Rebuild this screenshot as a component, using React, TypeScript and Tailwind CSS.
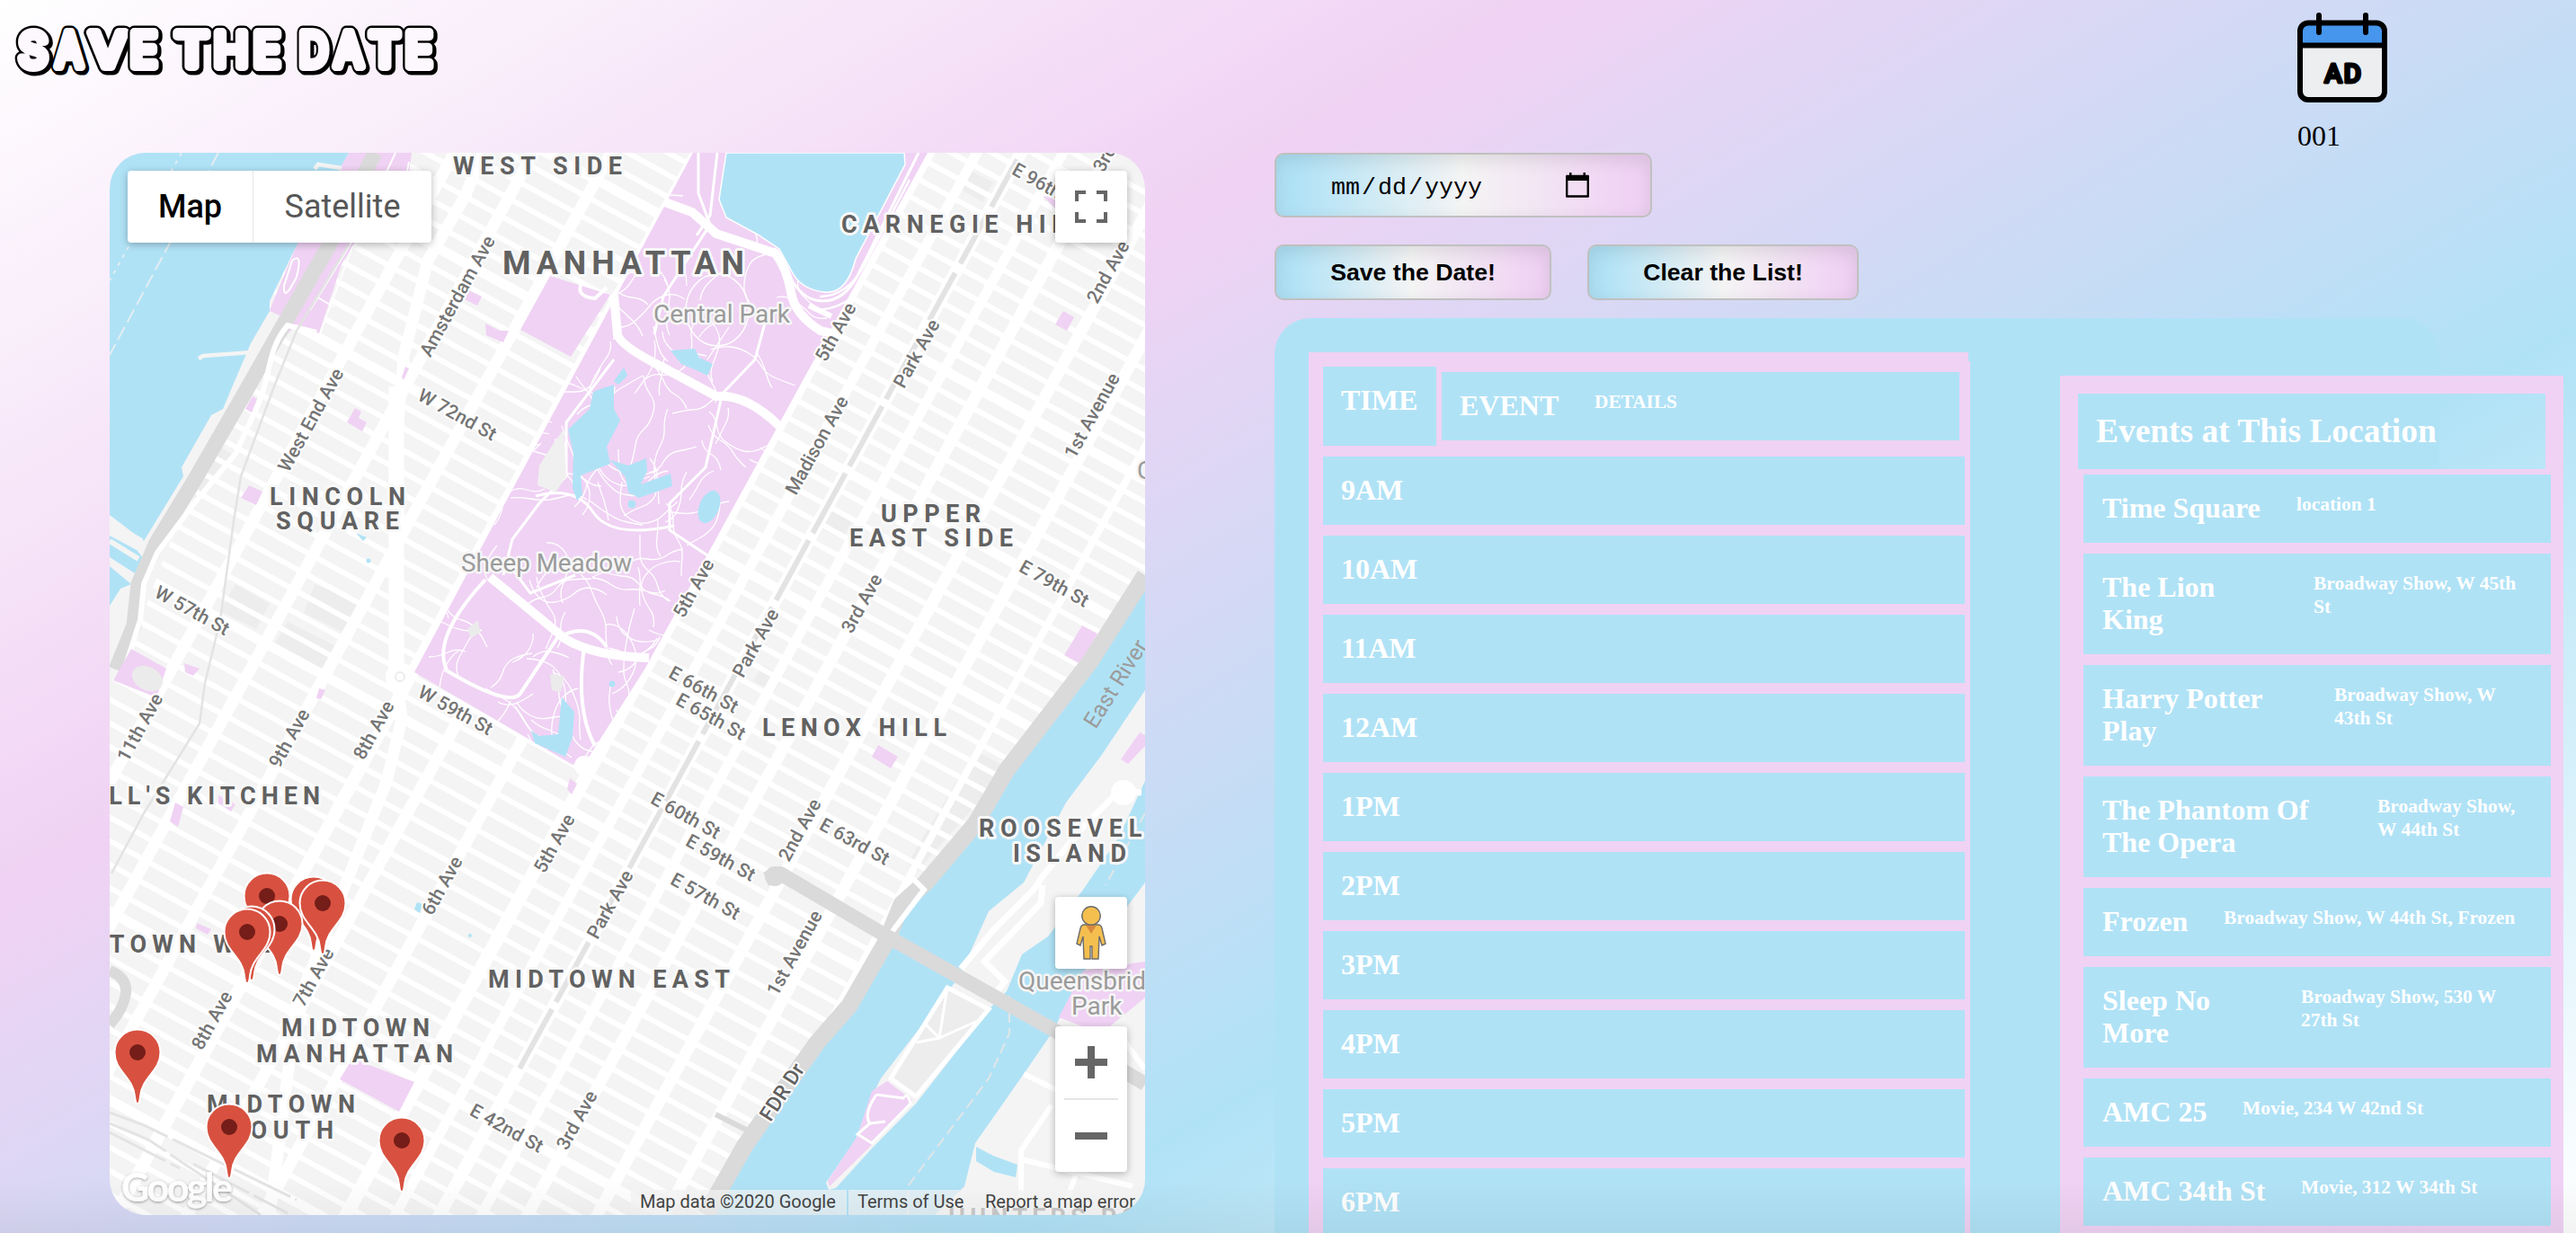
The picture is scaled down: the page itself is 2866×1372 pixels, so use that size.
import React from "react";

const SERIF = "font-['Liberation_Serif',serif]";

/* ---------- Map geometry ---------- */

const range = (a: number, b: number, s: number) => {
  const out: number[] = [];
  for (let v = a; v <= b; v += s) out.push(v);
  return out;
};

const NORTH_STREETS = range(0, 40, 1).map((n) => -n * 21.6);
const SOUTH_STREETS = range(1, 40, 1).map((n) => n * 23);

const AVENUES: [number, number][] = [
  [-392, 9], [-312, 10], [-237, 13], [-160, 13], [-84, 13], [0, 14], [225, 15],
  [273, 11], [316, 14], [357, 11], [402, 13], [470, 13], [536, 13], [594, 8],
];

function rng(seed: number) {
  let s = seed;
  return () => {
    s = (s * 16807) % 2147483647;
    return s / 2147483647;
  };
}

function parkPaths() {
  const r = rng(77);
  const out: string[] = [];
  for (let i = 0; i < 120; i++) {
    const u = r() * 225;
    const v = -r() * 660;
    let x = 457 + u * 0.877 - v * 0.48;
    let y = 752 + u * 0.48 + v * 0.877;
    let a = r() * Math.PI * 2;
    let d = `M${x.toFixed(0)} ${y.toFixed(0)}`;
    const n = 2 + Math.floor(r() * 4);
    for (let k = 0; k < n; k++) {
      const mx = x + Math.cos(a) * 10;
      const my = y + Math.sin(a) * 10;
      a += (r() - 0.5) * 1.9;
      x = mx + Math.cos(a) * 12;
      y = my + Math.sin(a) * 12;
      d += `Q${mx.toFixed(0)} ${my.toFixed(0)} ${x.toFixed(0)} ${y.toFixed(0)}`;
    }
    out.push(d);
  }
  return out.join("");
}
const PARK_PATHS = parkPaths();

const PARK = "771,170 1032,170 717,745 656,841 637,851 461,748";
const PINK = "#f0d2f4";
const BLUE = "#b0e2f6";
const HWY = "#dadada";

type Area = [string, number, number, number, number?];
const AREAS: Area[] = [
  ["WEST SIDE", 504, 194, 188],
  ["MANHATTAN", 559, 305, 269, 36],
  ["CARNEGIE HILL", 936, 259, 270],
  ["LINCOLN", 300, 562, 151],
  ["SQUARE", 307, 589, 137],
  ["UPPER", 980, 581, 111],
  ["EAST SIDE", 945, 608, 182],
  ["LENOX HILL", 848, 819, 205],
  ["HELL'S KITCHEN", 75, 895, 281],
  ["MIDTOWN WEST", 55, 1060, 273],
  ["MIDTOWN", 313, 1153, 165],
  ["MANHATTAN", 285, 1182, 219],
  ["MIDTOWN", 230, 1238, 165],
  ["SOUTH", 255, 1267, 116],
  ["MIDTOWN EAST", 543, 1099, 269],
  ["ROOSEVELT", 1089, 931, 202],
  ["ISLAND", 1127, 959, 126],
  ["HUNTERS POINT", 1055, 1364, 270],
];

const AVE_LABELS: [string, number, number][] = [
  ["Amsterdam Ave", 508, 329], ["West End Ave", 345, 467], ["11th Ave", 155, 809],
  ["9th Ave", 321, 821], ["8th Ave", 415, 812], ["5th Ave", 616, 938], ["6th Ave", 491, 985],
  ["Park Ave", 678, 1006], ["7th Ave", 348, 1087], ["8th Ave", 235, 1135], ["3rd Ave", 641, 1246],
  ["5th Ave", 929, 369], ["Park Ave", 1019, 393], ["Madison Ave", 908, 495],
  ["1st Avenue", 1214, 462], ["2nd Ave", 1232, 302], ["5th Ave", 771, 654], ["3rd Ave", 958, 671],
  ["Park Ave", 840, 715], ["3rd Ave", 1238, 158], ["2nd Ave", 889, 923], ["1st Avenue", 883, 1060],
];
const ST_LABELS: [string, number, number][] = [
  ["W 72nd St", 509, 461], ["W 57th St", 214, 679], ["W 59th St", 507, 790], ["E 42nd St", 564, 1255],
  ["E 79th St", 1173, 649], ["E 96th St", 1165, 207], ["E 66th St", 783, 767], ["E 65th St", 791, 797],
  ["E 60th St", 763, 907], ["E 59th St", 802, 954], ["E 57th St", 785, 997], ["E 63rd St", 951, 936],
];

const PINS: [number, number][] = [
  [297, 1054], [349, 1058], [359, 1062], [311, 1085], [280, 1091], [275, 1094],
  [153, 1228], [255, 1311], [447, 1326],
];

function MapCanvas() {
  return (
    <svg viewBox="122 170 1152 1182" className="block h-[1182px] w-[1152px] font-[Roboto,sans-serif]">
      <defs>
        <clipPath id="park"><polygon points={PARK} /></clipPath>
        <filter id="soft" x="-10%" y="-30%" width="120%" height="160%">
          <feDropShadow dx="0" dy="1" stdDeviation="1.5" floodColor="#000" floodOpacity="0.4" />
        </filter>
      </defs>
      <rect x="122" y="170" width="1152" height="1182" fill="#f4f4f4" />

      {/* larger grey lots */}
      <g fill="#ededed">
        <polygon points="262,650 300,672 285,700 245,680" />
        <polygon points="350,650 405,672 385,705 338,682" />
        <polygon points="1080,190 1105,203 1093,225 1068,210" />
        <polygon points="920,566 948,580 938,600 910,586" />
        <polygon points="240,494 262,508 215,565 196,570" />
        <polygon points="1085,835 1122,855 1020,970 1010,960" />
        <polygon points="848,740 872,752 862,770 838,758" />
        <polygon points="320,692 380,722 366,748 306,716" />
      </g>

      {/* street grid */}
      <g transform="translate(457 752) rotate(28.7)" stroke="#fff" fill="none">
        {NORTH_STREETS.map((y, i) => (
          <line key={i} x1={-420} x2={720} y1={y} y2={y} strokeWidth={i === 13 || i === 20 || i === 27 ? 11 : 6} />
        ))}
        {SOUTH_STREETS.map((y, i) => (
          <line key={i} x1={-420} x2={720} y1={y} y2={y} strokeWidth={i === 1 || i === 16 || i === 24 ? 11 : 6} />
        ))}
        {AVENUES.map(([x, w]) => (
          <line key={x} x1={x} x2={x} y1={-1000} y2={1000} strokeWidth={w} />
        ))}
        <line x1={70} x2={70} y1={0} y2={1000} strokeWidth={13} />
        <line x1={143} x2={143} y1={0} y2={1000} strokeWidth={13} />
        {/* rail line under Park Avenue */}
        <g stroke="#e3e3e3" strokeWidth="6">
          <line x1={316} x2={316} y1={-900} y2={-620} strokeDasharray="60 12" />
          <line x1={316} x2={316} y1={-600} y2={325} strokeDasharray="76 9" />
        </g>
      </g>
      {/* Broadway */}
      <path d="M537 170L518 217L476 290L449 397L440 504L441 745L447 800L430 870L330 1120L300 1352" fill="none" stroke="#fff" strokeWidth="13" strokeLinejoin="round" />
      <path d="M441 745V430" stroke="#fff" strokeWidth="17" />

      {/* west side park strip and Hudson */}
      <polygon points="388,170 458,170 452,215 394,272 380,294 355,371 329,361 280,420 300,345 329,275" fill={PINK} />
      <polygon points="300,346 322,356 240,500 200,575 160,680 140,740 122,760 122,560" fill="#f4f4f4" />
      <polygon points="122,170 388,170 329,275 300,335 300,346 279,382 248,455 235,462 202,520 204,530 160,602 122,573" fill={BLUE} />
      <polygon points="122,596 152,612 160,622 150,638 122,620" fill={BLUE} />
      <polygon points="122,630 146,650 134,655 122,674" fill={BLUE} />
      <path d="M122 582L158 602M122 602L154 622M122 626L150 646" stroke="#f4f4f4" strokeWidth="6" />
      <path d="M279 392L226 396L221 399M350 188L354 183L380 187" fill="none" stroke="#f4f4f4" strokeWidth="4.5" />
      <g fill="none" stroke="#e4eef2" strokeWidth="2">
        <path d="M243 170L122 395" strokeDasharray="16 6" />
        <path d="M202 170L122 312" strokeDasharray="4 6" />
      </g>
      <path d="M455 180L449 212L392 275L356 371M440 170L400 255L345 345M325 290q12 -10 5 18q-15 30 -14 10zM352 330L372 342" fill="none" stroke="#fff" strokeWidth="2" />
      <path d="M417 170L365 275L319 355L273 436L216 535L174 604L154 650L149 696L129 745" fill="none" stroke={HWY} strokeWidth="17" strokeLinejoin="round" />
      <path d="M352 370L320 362C296 390 302 420 285 455L262 505L216 560L175 615L160 650L156 690L140 740" fill="none" stroke="#fff" strokeWidth="6" />
      <path d="M388 272L330 368L305 430L268 530L260 580L245 690L228 760L222 805L160 905L124 972" fill="none" stroke="#e3e3e3" strokeWidth="2.5" />
      <polygon points="146,722 185,744 174,776 126,757" fill={PINK} />
      <ellipse cx="164" cy="755" rx="18" ry="13" fill="#ebebeb" transform="rotate(28 164 755)" />
      <path d="M122 1080Q142 1088 140 1105T122 1140" fill="none" stroke={HWY} strokeWidth="12" />
      <path d="M122 1238L160 1252L330 1335M122 1250L165 1268L290 1352M122 1260L200 1300M215 1295L320 1350" fill="none" stroke="#e4e4e4" strokeWidth="3" strokeDasharray="70 6" />

      {/* Central Park */}
      <polygon points={PARK} fill={PINK} />
      <polygon points="612,307 579,367 635,397 679,328" fill={PINK} />
      <g clipPath="url(#park)" fill="none" stroke="#fff">
        <path d={PARK_PATHS} strokeWidth="1.3" />
        <ellipse cx="798" cy="345" rx="35" ry="40" strokeWidth="1.5" />
        <path d="M777 170V215L790 250L738 330L728 372M798 170L790 240L775 262M1022 170L955 305Q940 335 915 335T875 300" strokeWidth="3" />
        <path d="M1012 200L962 295Q942 330 912 330M1030 180L965 310Q945 345 905 345" strokeWidth="2.5" />
        <path d="M683 400L630 470V530L600 560L570 600L560 640M596 552Q640 540 660 570T750 585M803 441L785 520L745 560V590L790 620" strokeWidth="3" />
        <path d="M497 745Q480 710 540 645M495 745Q570 790 580 770L620 710Q655 690 675 720M650 720Q640 790 662 830" strokeWidth="4" />
        <path d="M855 345L840 400L797 445M560 620L590 660L640 640" strokeWidth="3" />
      </g>
      <polygon points="618,490 627,478 630,530 618,548 598,540 600,518" fill="#f0f0f0" />
      <polygon points="520,700 532,690 534,704 524,710" fill="#ebebeb" />
      <polygon points="612,750 628,752 624,770 614,768" fill="#ebebeb" />
      <g fill={BLUE}>
        <path d="M808 170L800 222L808 242L843 261L867 277L882 304Q892 322 917 325T952 288L1007 183L1006 170Z" stroke="#fff" strokeWidth="1.5" />
        <path d="M670 432L683 428L683 455L690 468L675 497L679 516L646 529L648 550L642 557L637 543L638 504L632 478L656 455L660 436Z" />
        <path d="M694 409L698 418L688 428L683 424Z" />
        <path d="M679 512L699 518L719 510L720 524L713 539L746 527L748 541L711 554L699 548L696 531Z" />
        <ellipse cx="789" cy="564" rx="11" ry="19" transform="rotate(22 789 564)" />
        <path d="M746 390L773 388L778 398L793 405L787 418L775 412L758 405Z" />
        <path d="M591 813L600 819L621 817L625 776L639 792L637 820L629 842L595 827Z" />
        <circle cx="703" cy="561" r="4.5" />
        <circle cx="681" cy="761" r="3.5" />
      </g>
      <path d="M740 225L770 236L797 260L863 282Q876 300 880 325T913 368L930 372" fill="none" stroke="#fff" strokeWidth="10" />
      <path d="M683 328L687 372Q690 385 738 409L797 441Q830 438 867 474" fill="none" stroke="#fff" strokeWidth="10" />
      <path d="M545 642L629 711Q660 730 722 732" fill="none" stroke="#fff" strokeWidth="10" />
      <path d="M900 340L925 352" stroke="#fff" strokeWidth="6" />
      <path d="M647 315Q640 330 662 332L675 320" fill="none" stroke="#fff" strokeWidth="4" />
      <circle cx="445" cy="753" r="16" fill="#fff" />
      <circle cx="445" cy="753" r="5" fill="none" stroke="#ececec" strokeWidth="2" />
      <circle cx="650" cy="852" r="11" fill="#fff" />

      {/* pocket parks */}
      <g fill={PINK}>
        <polygon points="395,454 402,458 399,465 408,470 403,480 386,470" />
        <polygon points="522,323 536,330 531,340 517,333" />
        <polygon points="540,360 556,368 566,368 560,381 541,373" />
        <polygon points="277,540 292,547 285,562 268,554" />
        <polygon points="281,441 286,444 280,459 273,455" />
        <polygon points="451,408 455,410 449,423 447,420" />
        <polygon points="355,766 362,768 357,778 352,777" />
        <polygon points="195,893 204,898 198,920 189,914" />
        <polygon points="243,885 262,895 257,903 243,894" />
        <polygon points="219,1027 235,1034 231,1040 218,1033" />
        <polygon points="392,1178 461,1204 444,1237 378,1201" />
        <polygon points="634,866 642,872 636,884 631,878" />
        <polygon points="1183,346 1195,353 1187,368 1174,361" />
        <polygon points="1204,696 1221,705 1202,739 1184,729" />
        <polygon points="977,829 999,842 991,855 970,842" />
        <polygon points="205,738 222,744 215,752 206,748" />
        <polygon points="1160,218 1176,222 1176,234" />
      </g>
      <g fill={BLUE}>
        <polygon points="464,1004 470,1006 467,1016 461,1012" />
        <circle cx="523" cy="1041" r="2" />
        <polygon points="396,593 408,598 404,602" />
        <circle cx="410" cy="624" r="2.5" />
      </g>

      {/* East River */}
      <polygon points="1274,640 1213,740 1120,857 1085,917 1030,982 1003,1006 987,1046 945,1119 910,1159 875,1208 828,1276 785,1352 1274,1352" fill={BLUE} />
      <path d="M1274 640L1213 736L1120 857L1085 917L1030 982L1003 1006L987 1046L945 1119L910 1159L875 1208L828 1276L785 1352" fill="none" stroke={HWY} strokeWidth="19" strokeLinejoin="round" />
      <path d="M796 1240L830 1257" stroke={HWY} strokeWidth="6" />
      <path d="M1010 972L1028 990L990 1040" fill="none" stroke="#fff" strokeWidth="6" />
      <polygon points="1274,982 1256,1006 1197,1095 1172,1147 1139,1195 1085,1272 1073,1320 1040,1352 1274,1352" fill="#f4f4f4" />
      <polygon points="1178,1132 1205,1080 1274,1070 1274,1110 1225,1150" fill={PINK} />
      <polygon points="1086,1276 1105,1286 1132,1296 1130,1310 1106,1304 1086,1292" fill={BLUE} />
      <path d="M1136 1352V1280L1170 1230M1136 1290L1260 1320M1200 1300L1180 1352M1245 1150L1274 1190M1139 1195L1180 1215" fill="none" stroke="#fff" strokeWidth="6" />
      <polygon points="1274,768 1225,841 1186,893 1139,982 1100,1014 1069,1083 1061,1095 980,1200 968,1224 952,1268 919,1316 922,1324 930,1322 968,1280 1019,1228 1104,1119 1120,1103 1137,1062 1166,1042 1205,990 1244,933 1274,869" fill="#f4f4f4" />
      <path d="M1270 882L1245 880L1205 920L1160 975L1150 990L1105 1035L1069 1078M1160 985L1158 1005L1095 1070L1118 1092L1108 1105" fill="none" stroke="#fff" strokeWidth="7" />
      <circle cx="1250" cy="882" r="14" fill="#fff" />
      <polygon points="1054,1099 1100,1123 1019,1220 991,1200" fill="#ededed" stroke="#fff" strokeWidth="5" />
      <path d="M1054 1099L1045 1155L1090 1135M1030 1140L1045 1155L1020 1160" fill="none" stroke="#fff" strokeWidth="3" />
      <polygon points="987,1203 1015,1224 968,1276 923,1320 921,1314 954,1264 970,1214" fill={PINK} />
      <path d="M975 1218L1005 1222Q1010 1215 1013 1228L970 1272L954 1262L968 1250Q960 1240 975 1218M968 1250L985 1248" fill="none" stroke="#fff" strokeWidth="3" />
      <polygon points="1268,815 1274,818 1274,830 1255,850 1247,845" fill={PINK} />
      <path d="M1274 905L1230 985M1123 1108V1150L1100 1200L1010 1320V1352" fill="none" stroke="#e1e6e8" strokeWidth="2" strokeDasharray="12 6" />
      <path d="M852 978L868 972L987 1042L1174 1147L1274 1206" fill="none" stroke={HWY} strokeWidth="16" strokeLinejoin="round" />
      <circle cx="862" cy="975" r="11" fill={HWY} />

      {/* water and park names */}
      <g fill="#9b9b9b" stroke="#f6f6f6" strokeWidth="5" strokeLinejoin="round" fontSize="28" style={{ paintOrder: "stroke" }}>
        <text x="727" y="359" textLength="152" lengthAdjust="spacingAndGlyphs">Central Park</text>
        <text x="513" y="636" textLength="190" lengthAdjust="spacingAndGlyphs">Sheep Meadow</text>
        <text x="1133" y="1101">Queensbridge</text>
        <text x="1192" y="1129">Park</text>
        <text x="1265" y="533">C</text>
      </g>
      <text transform="translate(1219 812) rotate(-58)" fontSize="25" fill="#9b9b9b">East River</text>

      {/* street names */}
      <g fill="#757575" stroke="#fff" strokeWidth="4" strokeLinejoin="round" fontSize="21" fontWeight="500" textAnchor="middle" style={{ paintOrder: "stroke" }}>
        {AVE_LABELS.map(([t, x, y], i) => (
          <text key={i} transform={`translate(${x} ${y}) rotate(-61)`} y="8">{t}</text>
        ))}
        {ST_LABELS.map(([t, x, y], i) => (
          <text key={i} transform={`translate(${x} ${y}) rotate(29)`} y="7.5">{t}</text>
        ))}
        <text transform="translate(870 1215) rotate(-57)" y="8" fill="#616161" fontSize="23">FDR Dr</text>
      </g>

      {/* neighbourhood names */}
      <g fill="#616161" stroke="#f8f8f8" strokeWidth="6" strokeLinejoin="round" fontWeight="700" style={{ paintOrder: "stroke" }}>
        {AREAS.map(([t, x, y, w, size], i) => (
          <text key={i} x={x} y={y} textLength={w} fontSize={size ?? 27}>{t}</text>
        ))}
      </g>

      <text x="135" y="1337" fontSize="43" textLength="124" fill="#fff" filter="url(#soft)" className="font-[Lato,sans-serif] font-bold">Google</text>

      {/* pins */}
      {PINS.map(([x, y], i) => (
        <g key={i} transform={`translate(${x} ${y})`}>
          <path d="M0 0C-2.200 0 -2.500 -3 -3 -8C-5 -30 -25.500 -36 -25.500 -57A25.500 25.500 0 0 1 25.500 -57C25.500 -36 5 -30 3 -8C2.500 -3 2.200 0 0 0Z" fill="#d85140" stroke="#fff" strokeWidth="2" />
          <circle cx="0" cy="-57" r="9" fill="#751d18" />
        </g>
      ))}
    </svg>
  );
}

const CONTROL = "absolute rounded-[4px] bg-white shadow-[0_2px_8px_rgba(0,0,0,0.28)]";

function MapPanel() {
  return (
    <div className="relative ml-[122px] h-[1182px] w-[1152px] shrink-0 overflow-hidden rounded-[40px] font-[Roboto,sans-serif]">
      <MapCanvas />
      <div className={`${CONTROL} left-[20px] top-[20px] flex h-[80px] w-[338px] items-center text-[36px]`}>
        <div className="flex h-full w-[140px] items-center justify-center border-r border-[#e6e6e6] pb-[1px] font-medium text-black">Map</div>
        <div className="flex-1 pb-[1px] text-center text-[#565656]">Satellite</div>
      </div>
      <div className={`${CONTROL} right-[20px] top-[20px] flex size-[80px] items-center justify-center`}>
        <svg viewBox="0 0 18 18" className="size-[36px]" fill="#666">
          <path d="M0 0v6h2V2h4V0zM12 0v2h4v4h2V0zM0 12v6h6v-2H2v-4zM16 12v4h-4v2h6v-6z" />
        </svg>
      </div>
      <div className={`${CONTROL} right-[20px] top-[828px] flex h-[80px] w-[80px] items-center justify-center`}>
        <svg viewBox="0 0 34 60" className="h-[60px] w-[34px]" fill="#f5bf4f" stroke="#6b6b6b" strokeWidth="1.400">
          <path d="M9 21H25Q28 21 29 25L33 42L29 44L26 34L25 59H18V45H16V59H9L8 34L5 44L1 42L5 25Q6 21 9 21Z" />
          <path d="M11 21.500H23L17 31Z" fill="#d88a3f" stroke="none" />
          <circle cx="17" cy="11" r="10.200" />
        </svg>
      </div>
      <div className={`${CONTROL} right-[20px] top-[972px] flex h-[162px] w-[80px] flex-col items-center`}>
        <div className="flex h-[80px] items-center">
          <svg viewBox="0 0 36 36" className="size-[36px]" fill="#666"><path d="M14 0h8v14h14v8H22v14h-8V22H0v-8h14z" /></svg>
        </div>
        <div className="h-[2px] w-[60px] bg-[#e6e6e6]" />
        <div className="flex h-[80px] items-center">
          <div className="h-[8px] w-[36px] bg-[#666]" />
        </div>
      </div>
      <div className="absolute bottom-0 right-0 flex h-[28px] text-[20px] leading-[26px] whitespace-nowrap text-[#444]">
        <div className="mr-[2px] w-[240px] bg-[#f5f5f5]/70 pl-[10px]">Map data ©2020 Google</div>
        <div className="w-[142px] bg-[#f5f5f5]/70 pl-[10px]">Terms of Use</div>
        <div className="w-[188px] bg-[#f5f5f5]/70 pl-[10px]">Report a map error</div>
      </div>
    </div>
  );
}

/* ---------- Header ---------- */

const LOGO: [string, number, number][] = [
  ["S", 17, 58], ["A", 58, 97], ["V", 96, 145], ["E", 141, 180],
  ["T", 191, 237], ["H", 234, 281], ["E", 278, 317],
  ["D", 329, 370], ["A", 368, 409], ["T", 407, 450], ["E", 447, 486],
];

function Logo() {
  return (
    <svg viewBox="0 0 500 110" className="h-[110px] w-[500px] shrink-0 font-[Inter,sans-serif]" fontSize="52" fontWeight="400" strokeLinejoin="round" strokeLinecap="round">
      {LOGO.map(([c, a, b], i) => {
        const p = { textLength: b - a - 9, lengthAdjust: "spacingAndGlyphs" as const };
        return (
          <g key={i}>
            <text x={a + 6} y={76} {...p} fill="#000" stroke="#000" strokeWidth="15">{c}</text>
            <text x={a + 4} y={74} {...p} fill="#000" stroke="#000" strokeWidth="15">{c}</text>
            <text x={a + 4} y={74} {...p} fill="#fdf8fd" stroke="#fdf8fd" strokeWidth="10">{c}</text>
          </g>
        );
      })}
    </svg>
  );
}

function CalendarBadge() {
  return (
    <div className="ml-[2056px] pt-[14px]">
      <svg viewBox="0 0 100 100" className="size-[100px]">
        <rect x="3" y="11.500" width="94" height="85.500" rx="9" fill="#edeef0" />
        <path d="M3 36V20a9 9 0 0 1 9-9H88a9 9 0 0 1 9 9V36Z" fill="#4596ec" />
        <rect x="3" y="11.500" width="94" height="85.500" rx="9" fill="none" stroke="#000" strokeWidth="6" />
        <path d="M3 36.500H97M24 3V22M76 3V22" stroke="#000" strokeWidth="6" strokeLinecap="round" />
        <text x="30" y="77.500" textLength="41" fontSize="30" fontWeight="500" stroke="#000" strokeWidth="3" strokeLinejoin="round" className="font-[Roboto,sans-serif]">AD</text>
      </svg>
      <div className={`${SERIF} mt-[19px] text-[32px] leading-[36px] text-black`}>001</div>
    </div>
  );
}

/* ---------- Controls ---------- */

const FIELD =
  "flex items-center rounded-[10px] border-2 border-[#c0c0c0] bg-[linear-gradient(to_right,#b0e2f6_5%,#f4f4f4_50%,#f0d2f4_95%)] text-black shadow-[inset_0_6px_20px_rgba(0,0,0,0.1)]";

function DateControls() {
  return (
    <div>
      <div className={`${FIELD} h-[72px] w-[420px] pl-[61px] font-['Liberation_Mono',monospace] text-[26.670px]`}>
        <span className="mt-[6px] flex w-[261px] gap-[2px]">
          <span>mm</span><span>/</span><span>dd</span><span>/</span><span>yyyy</span>
        </span>
        <svg viewBox="0 0 26 28" className="h-[28px] w-[26px]">
          <path d="M1.200 4H24.800V26.500H1.200Z" fill="none" stroke="#000" strokeWidth="2.400" strokeLinejoin="round" />
          <path d="M1 3H25V9H1ZM4 0H6.500V4H4ZM19.500 0H22V4H19.500Z" />
        </svg>
      </div>
      <div className="mt-[30px] flex gap-[40px] font-['Liberation_Sans',sans-serif] text-[26.670px] font-bold">
        <div className={`${FIELD} h-[62px] w-[308px] justify-center`}>Save the Date!</div>
        <div className={`${FIELD} h-[62px] w-[302px] justify-center`}>Clear the List!</div>
      </div>
    </div>
  );
}

/* ---------- Schedule ---------- */

const HOURS = ["9AM", "10AM", "11AM", "12AM", "1PM", "2PM", "3PM", "4PM", "5PM", "6PM"];

function Schedule() {
  return (
    <div className="w-[736px] shrink-0 text-[32px] leading-[36px]">
      <div className="h-[10px] w-[734px] bg-[#f0d2f4]" />
      <div className="flex h-[1200px] flex-col gap-[12px] bg-[#f0d2f4] pl-[16px] pt-[6px]">
        <div className="flex h-[88px] gap-[6px]">
          <div className="h-[88px] w-[126px] bg-[#b0e2f6] pl-[20px] pt-[19px]">TIME</div>
          <div className="mt-[6px] flex h-[76px] w-[576px] bg-[#b0e2f6] pl-[20px] pt-[19px]">
            <div className="w-[150px]">EVENT</div>
            <div className="pt-[1px] text-[21.300px] leading-[26px]">DETAILS</div>
          </div>
        </div>
        {HOURS.map((h) => (
          <div key={h} className="h-[76px] w-[714px] shrink-0 bg-[#b0e2f6] pl-[20px] pt-[19px]">{h}</div>
        ))}
      </div>
    </div>
  );
}

const EVENTS: { name: string[]; info: string[]; col: number }[] = [
  { name: ["Time Square"], info: ["location 1"], col: 216 },
  { name: ["The Lion", "King"], info: ["Broadway Show, W 45th", "St"], col: 235 },
  { name: ["Harry Potter", "Play"], info: ["Broadway Show, W", "43th St"], col: 258 },
  { name: ["The Phantom Of", "The Opera"], info: ["Broadway Show,", "W 44th St"], col: 306 },
  { name: ["Frozen"], info: ["Broadway Show, W 44th St, Frozen"], col: 135 },
  { name: ["Sleep No", "More"], info: ["Broadway Show, 530 W", "27th St"], col: 221 },
  { name: ["AMC 25"], info: ["Movie, 234 W 42nd St"], col: 156 },
  { name: ["AMC 34th St"], info: ["Movie, 312 W 34th St"], col: 221 },
];

function Events() {
  return (
    <div className="ml-[100px] mt-[26px] w-[560px] shrink-0">
      <div className="h-[110px] border-x-[20px] border-b-[6px] border-t-[20px] border-[#f0d2f4] pl-[20px] pt-[20px] text-[37.440px] leading-[44px]">
        Events at This Location
      </div>
      <div className="flex h-[900px] flex-col gap-[12px] bg-[#f0d2f4] pl-[26px]">
        {EVENTS.map((e) => (
          <div key={e.name[0]} className="flex w-[520px] bg-[#b0e2f6] pb-[21px] pl-[21px] pt-[19px] whitespace-nowrap">
            <div className="shrink-0 text-[32px] leading-[36px]" style={{ width: e.col }}>
              {e.name.map((l) => <div key={l}>{l}</div>)}
            </div>
            <div className="h-[36px] pt-[1px] text-[21.440px] leading-[26px]">
              {e.info.map((l) => <div key={l}>{l}</div>)}
            </div>
          </div>
        ))}
      </div>
    </div>
  );
}

export default function App() {
  return (
    <div className="relative h-[1372px] w-[2866px] overflow-hidden bg-[linear-gradient(150deg,#ffffff,#f0d2f4,#b0e2f6,#ffffff)]">
      <header className="flex h-[170px]">
        <Logo />
        <CalendarBadge />
      </header>
      <main className="flex gap-[144px]">
        <MapPanel />
        <div className="w-[1296px] shrink-0">
          <DateControls />
          <div className={`${SERIF} mt-[20px] flex h-[1100px] w-[1296px] rounded-[40px] bg-[#b0e2f6] pl-[38px] pt-[38px] font-bold text-white`}>
            <Schedule />
            <Events />
          </div>
        </div>
      </main>
      <div className="pointer-events-none absolute inset-x-0 bottom-0 h-[60px] bg-linear-to-b from-black/0 to-black/5" />
    </div>
  );
}
